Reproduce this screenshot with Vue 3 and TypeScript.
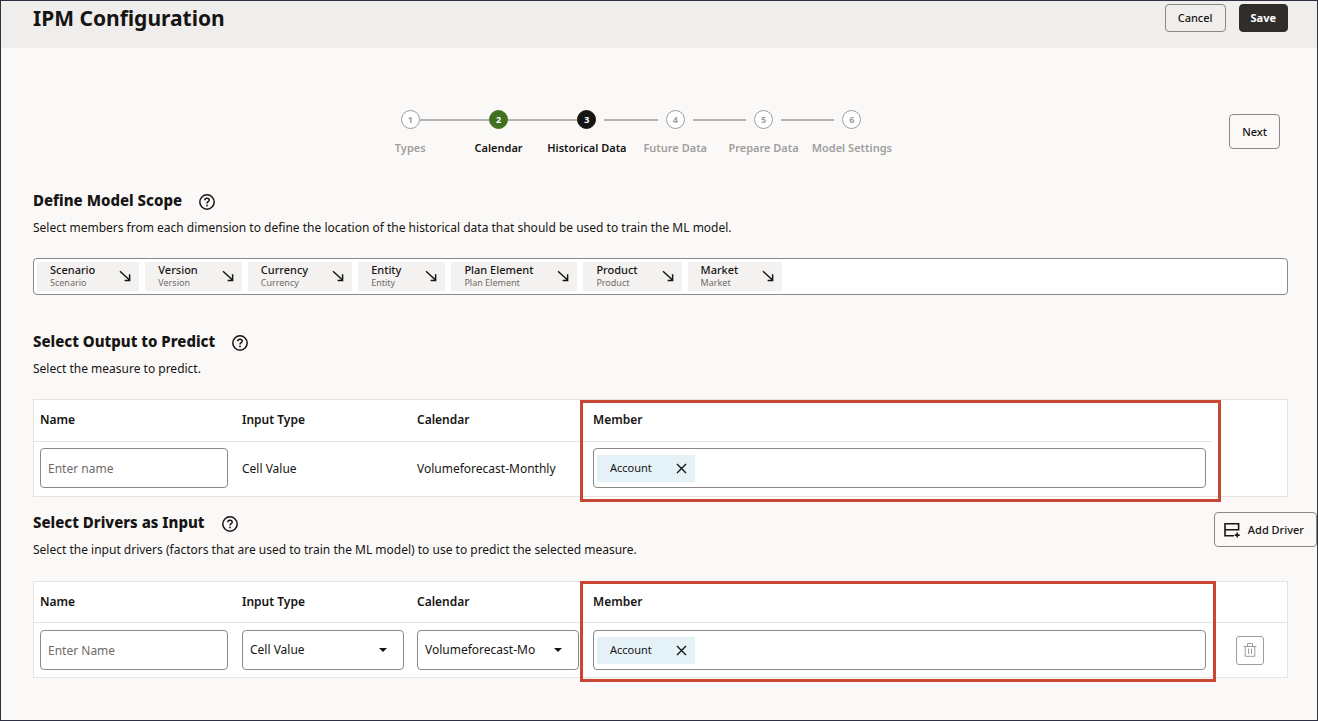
<script setup lang="ts">
import { ref } from 'vue'

interface Step {
  label: string
  state: 'todo' | 'done' | 'current'
  before: 'none' | 'joined' | 'spaced'
  after: 'none' | 'joined' | 'spaced'
}

const steps: Step[] = [
  { label: 'Types', state: 'todo', before: 'none', after: 'joined' },
  { label: 'Calendar', state: 'done', before: 'joined', after: 'joined' },
  { label: 'Historical Data', state: 'current', before: 'joined', after: 'spaced' },
  { label: 'Future Data', state: 'todo', before: 'spaced', after: 'spaced' },
  { label: 'Prepare Data', state: 'todo', before: 'spaced', after: 'spaced' },
  { label: 'Model Settings', state: 'todo', before: 'spaced', after: 'none' },
]

const dimensions: string[] = ['Scenario', 'Version', 'Currency', 'Entity', 'Plan Element', 'Product', 'Market']

const outputName = ref('')
const driverName = ref('')
const inputType = ref('Cell Value')
const calendar = ref('Volumeforecast-Monthly')
</script>

<template>
  <div class="page">
    <header class="topbar">
      <h1>IPM Configuration</h1>
      <div class="actions">
        <button type="button" class="btn small">Cancel</button>
        <button type="button" class="btn small primary">Save</button>
      </div>
    </header>

    <main>
      <div class="train">
        <ol class="steps">
          <li v-for="(step, i) in steps" :key="step.label" :class="step.state">
            <div class="track">
              <span class="line" :class="step.before"></span>
              <span class="dot">{{ i + 1 }}</span>
              <span class="line" :class="step.after"></span>
            </div>
            <span class="label">{{ step.label }}</span>
          </li>
        </ol>
        <button type="button" class="btn next">Next</button>
      </div>

      <section class="scope">
        <div class="heading">
          <h2>Define Model Scope</h2>
          <button type="button" class="help" aria-label="Help on model scope">
            <svg viewBox="0 0 16 16" width="16" height="16"><circle cx="8" cy="8" r="7.2" /><path d="M5.8 6.3c0-1.3 1-2.1 2.2-2.1s2.2.8 2.2 2c0 1.5-2.2 1.5-2.2 3.2" /><circle class="solid" cx="8" cy="11.5" r="0.9" /></svg>
          </button>
        </div>
        <p>Select members from each dimension to define the location of the historical data that should be used to train the ML model.</p>
        <div class="scope-bar">
          <button v-for="name in dimensions" :key="name" type="button" class="dim">
            <span class="dim-text">
              <span class="dim-name">{{ name }}</span>
              <span class="dim-sub">{{ name }}</span>
            </span>
            <svg viewBox="0 0 12 12" width="12" height="12"><path d="M1 1.3l9.5 8.7M10.6 4.2v6.3H5.6" /></svg>
          </button>
        </div>
      </section>

      <section class="output">
        <div class="heading">
          <h2>Select Output to Predict</h2>
          <button type="button" class="help" aria-label="Help on output">
            <svg viewBox="0 0 16 16" width="16" height="16"><circle cx="8" cy="8" r="7.2" /><path d="M5.8 6.3c0-1.3 1-2.1 2.2-2.1s2.2.8 2.2 2c0 1.5-2.2 1.5-2.2 3.2" /><circle class="solid" cx="8" cy="11.5" r="0.9" /></svg>
          </button>
        </div>
        <p>Select the measure to predict.</p>
        <div class="grid-wrap">
          <table>
            <colgroup><col class="c-name" /><col class="c-type" /><col class="c-cal" /><col /><col class="c-act" /></colgroup>
            <thead>
              <tr><th>Name</th><th>Input Type</th><th>Calendar</th><th>Member</th><td class="blank"></td></tr>
            </thead>
            <tbody>
              <tr>
                <td><input v-model="outputName" type="text" placeholder="Enter name" aria-label="Output name" /></td>
                <td>Cell Value</td>
                <td>Volumeforecast-Monthly</td>
                <td>
                  <div class="members">
                    <span class="chip">Account
                      <button type="button" aria-label="Remove Account"><svg viewBox="0 0 11 11" width="11" height="11"><path d="M1 1l9 9M10 1l-9 9" /></svg></button>
                    </span>
                  </div>
                </td>
                <td></td>
              </tr>
            </tbody>
          </table>
          <div class="callout"></div>
        </div>
      </section>

      <section class="drivers">
        <div class="split">
          <div>
            <div class="heading">
              <h2>Select Drivers as Input</h2>
              <button type="button" class="help" aria-label="Help on drivers">
                <svg viewBox="0 0 16 16" width="16" height="16"><circle cx="8" cy="8" r="7.2" /><path d="M5.8 6.3c0-1.3 1-2.1 2.2-2.1s2.2.8 2.2 2c0 1.5-2.2 1.5-2.2 3.2" /><circle class="solid" cx="8" cy="11.5" r="0.9" /></svg>
              </button>
            </div>
            <p>Select the input drivers (factors that are used to train the ML model) to use to predict the selected measure.</p>
          </div>
          <button type="button" class="btn add">
            <svg viewBox="0 0 16 16" width="16" height="16"><path d="M14.6 8.6V1.7H1v12.1h9M1 7.7h13.6M13.2 10.6v5M10.7 13.1h5" /></svg>
            Add Driver
          </button>
        </div>
        <div class="grid-wrap">
          <table>
            <colgroup><col class="c-name" /><col class="c-type" /><col class="c-cal" /><col /><col class="c-act" /></colgroup>
            <thead>
              <tr><th>Name</th><th>Input Type</th><th>Calendar</th><th>Member</th><td></td></tr>
            </thead>
            <tbody>
              <tr>
                <td><input v-model="driverName" type="text" placeholder="Enter Name" aria-label="Driver name" /></td>
                <td>
                  <div class="select">
                    <select v-model="inputType" aria-label="Input type"><option>Cell Value</option></select>
                    <svg viewBox="0 0 8 4" width="8" height="4"><path d="M0 0h8L4 4z" /></svg>
                  </div>
                </td>
                <td>
                  <div class="select">
                    <select v-model="calendar" aria-label="Calendar"><option>Volumeforecast-Monthly</option></select>
                    <svg viewBox="0 0 8 4" width="8" height="4"><path d="M0 0h8L4 4z" /></svg>
                  </div>
                </td>
                <td>
                  <div class="members">
                    <span class="chip">Account
                      <button type="button" aria-label="Remove Account"><svg viewBox="0 0 11 11" width="11" height="11"><path d="M1 1l9 9M10 1l-9 9" /></svg></button>
                    </span>
                  </div>
                </td>
                <td class="act">
                  <button type="button" class="trash" aria-label="Delete driver">
                    <svg viewBox="0 0 14 14" width="14" height="14"><path d="M0.5 3.5h13M4.5 3.5v-3h5v3M2.2 3.5v9.8h9.6V3.5M5.5 5.5v5.5M8.5 5.5v5.5" /></svg>
                  </button>
                </td>
              </tr>
            </tbody>
          </table>
          <div class="callout"></div>
        </div>
      </section>
    </main>
  </div>
</template>

<style>
body {
  margin: 0;
}
</style>

<style scoped>
.page,
.page * {
  box-sizing: border-box;
}
.page {
  min-height: 100vh;
  border: 1px solid #2f3142;
  background: #fbf9f8;
  color: #161513;
  font-family: 'Noto Sans', 'Open Sans', sans-serif;
  font-size: 12px;
  line-height: 20px;
  overflow: hidden;
}
h1,
h2,
p,
ol {
  margin: 0;
  padding: 0;
}
button,
input,
select {
  font: inherit;
  color: inherit;
}
button {
  cursor: pointer;
}
svg {
  display: block;
  flex: none;
  fill: none;
  stroke: currentColor;
}
.topbar {
  display: flex;
  justify-content: space-between;
  align-items: flex-start;
  height: 47px;
  padding: 3px 29px 0 32px;
  background: #f0eeed;
}
h1 {
  font-size: 21px;
  line-height: 28px;
  font-weight: 700;
}
.actions {
  display: flex;
  gap: 13px;
}
.btn {
  border: 1px solid #8b8987;
  border-radius: 4px;
  background: transparent;
  padding: 0 12px;
  height: 35px;
  font-size: 11px;
  line-height: 16px;
  font-weight: 500;
  white-space: nowrap;
}
.btn.small {
  height: 28px;
}
.btn.primary {
  padding: 0 11px;
  background: #312d2a;
  border-color: #312d2a;
  color: #fff;
  font-weight: 700;
}
main {
  padding: 62px 29px 40px 32px;
}
.train {
  display: flex;
  align-items: flex-start;
  padding-right: 8px;
}
.steps {
  display: flex;
  width: 530px;
  margin: 0 auto;
  list-style: none;
}
.steps li {
  flex: 1;
  min-width: 0;
  color: #a09e9c;
  font-size: 11px;
  line-height: 16px;
  font-weight: 600;
  text-align: center;
}
.steps li.done,
.steps li.current {
  color: #161513;
}
.track {
  display: grid;
  grid-template-columns: 1fr 19px 1fr;
  align-items: center;
  height: 19px;
  margin-bottom: 11px;
}
.line {
  height: 2px;
  background: #b4b2b0;
}
.line.none {
  background: transparent;
}
.line.spaced:first-child {
  margin-right: 8px;
}
.line.spaced:last-child {
  margin-left: 8px;
}
.dot {
  height: 19px;
  border: 1px solid #a09e9c;
  border-radius: 50%;
  background: #fff;
  font-size: 9px;
  line-height: 17px;
  font-weight: 700;
}
.steps .done .dot {
  background: #41701f;
  border-color: #41701f;
  color: #fff;
}
.steps .current .dot {
  background: #161513;
  border-color: #161513;
  color: #fff;
}
.label {
  display: block;
  white-space: nowrap;
}
.next {
  margin-top: 4px;
}
.heading {
  display: flex;
  align-items: center;
  gap: 17px;
  margin-bottom: 6px;
}
h2 {
  font-size: 15px;
  line-height: 24px;
  font-weight: 800;
}
.help {
  border: 0;
  background: none;
  padding: 3px 0 0;
}
.help svg {
  stroke-width: 1.5;
}
.solid {
  fill: currentColor;
  stroke: none;
}
.scope {
  margin-top: 32px;
}
.scope-bar {
  display: flex;
  gap: 6px;
  margin-top: 20px;
  height: 37px;
  padding: 3px;
  border: 1px solid #8b8987;
  border-radius: 4px;
  background: #fff;
}
.dim {
  display: flex;
  align-items: center;
  gap: 24px;
  border: 0;
  padding: 0 8px 2px 13px;
  background: #f4f2f1;
  text-align: left;
}
.dim-text {
  display: flex;
  flex-direction: column;
}
.dim-name {
  font-size: 11px;
  line-height: 14px;
  font-weight: 500;
}
.dim-sub {
  color: #6f6c6a;
  font-size: 9px;
  line-height: 12px;
}
.dim svg {
  stroke-width: 1.5;
}
.output {
  margin-top: 34px;
}
.output .grid-wrap {
  margin-top: 20px;
}
.drivers {
  margin-top: 13px;
}
.drivers .grid-wrap {
  margin-top: 21px;
}
.split {
  display: flex;
  justify-content: space-between;
  align-items: flex-start;
}
.add {
  display: flex;
  align-items: center;
  gap: 8px;
  margin: 2px -29px 0 0;
  padding: 0 12px 0 9px;
  background: #fbf9f8;
}
.add svg {
  stroke-width: 1.6;
}
.grid-wrap {
  position: relative;
  border: 1px solid #e6e4e2;
  background: #fff;
}
table {
  width: 100%;
  table-layout: fixed;
  border-collapse: separate;
  border-spacing: 0;
}
.c-name {
  width: 201px;
}
.c-type {
  width: 176px;
}
.c-cal {
  width: 175px;
}
.c-act {
  width: 75px;
}
th,
td {
  padding: 0 7px;
}
th:first-child,
td:first-child,
th:nth-child(3),
td:nth-child(3) {
  padding-left: 6px;
}
td:nth-child(4) {
  padding-right: 6px;
}
th,
thead td {
  height: 41px;
  border-bottom: 1px solid #e6e4e2;
  font-weight: 600;
  text-align: left;
}
.output th,
.output thead td {
  height: 42px;
  padding-bottom: 2px;
}
thead .blank {
  border-bottom: 0;
}
tbody td {
  height: 54px;
}
.output tbody td {
  padding-bottom: 2px;
}
.output tbody td:nth-child(2),
.output tbody td:nth-child(3) {
  padding-bottom: 0;
}
input,
select,
.members {
  display: block;
  width: 100%;
  height: 40px;
  border: 1px solid #8b8987;
  border-radius: 4px;
  background: #fff;
}
input {
  padding: 0 7px;
}
input::placeholder {
  color: #6f6c6a;
  opacity: 1;
}
.select {
  position: relative;
}
select {
  appearance: none;
  padding: 0 42px 0 7px;
}
.select svg {
  position: absolute;
  right: 17px;
  top: 18px;
  fill: currentColor;
  stroke: none;
  pointer-events: none;
}
.members {
  display: flex;
  align-items: center;
  padding: 0 3px;
}
.chip {
  display: flex;
  align-items: center;
  justify-content: space-between;
  width: 98px;
  height: 27px;
  padding: 0 8px 0 13px;
  background: #e4f1f7;
  font-size: 11px;
}
.chip button {
  border: 0;
  background: none;
  padding: 0;
}
.chip svg {
  stroke-width: 1.4;
}
td.act {
  padding-left: 24px;
}
.trash {
  display: flex;
  align-items: center;
  justify-content: center;
  width: 28px;
  height: 29px;
  padding: 0;
  border: 1px solid #a09e9c;
  border-radius: 3px;
  background: #fff;
  color: #a09e9c;
}
.callout {
  position: absolute;
  top: 0;
  bottom: -6px;
  left: 546px;
  right: 66px;
  border: 3px solid #c74634;
  pointer-events: none;
}
.drivers .callout {
  top: -1px;
  bottom: -5px;
  right: 71px;
}
</style>
